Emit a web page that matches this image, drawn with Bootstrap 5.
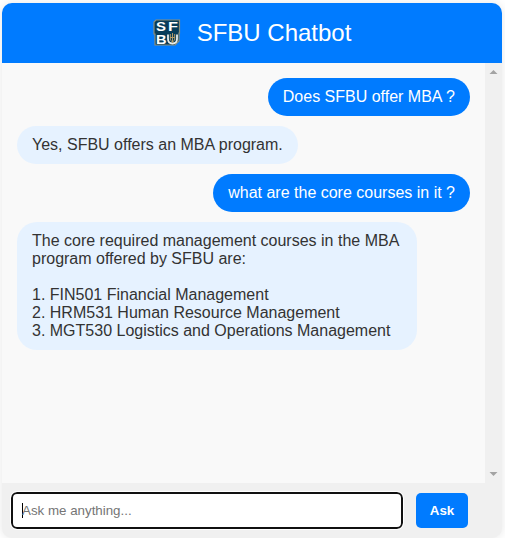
<!DOCTYPE html>
<html lang="en">
<head>
<meta charset="utf-8">
<meta name="viewport" content="width=device-width, initial-scale=1">
<title>SFBU Chatbot</title>
<link href="https://cdn.jsdelivr.net/npm/bootstrap@5.3.0/dist/css/bootstrap.min.css" rel="stylesheet">
<style>
body { font-family: "Liberation Sans", Arial, sans-serif; line-height: 18px; color: #333; padding: 3px 3px 0 2px; }
.chat { width: 500px; height: 535px; border-radius: 10px; background: #f0f0f0; box-shadow: 0 0 10px rgba(0,0,0,.1); }
.chat-head { height: 60px; background: #007bff; gap: 16px; }
.chat-title { font-size: 24px; line-height: 28px; font-weight: 400; }
.chat-body { height: 420px; }
.messages { background: #f9f9f9; padding: 15px; gap: 10px; }
.bubble { padding: 10px 15px; border-radius: 20px; max-width: 400px; }
.bubble-user { background: #007bff; color: #fff; }
.bubble-bot { background: #e6f2ff; }
.scroll-track { width: 17px; padding: 7px 0; }
.chat-foot { height: 55px; padding: 0 9px; gap: 13px; }
.ask-input { width: 392px; height: 37px; padding: 0 0 0 9px; border: 2px solid #101010; border-radius: 6px; outline: 1px solid #fff; outline-offset: 0; font-size: 13.33px; color: #757575; background: #fff; }
.caret { width: 1px; height: 15px; background: #000; margin-right: -1px; }
.ask-btn { width: 52px; height: 35px; background: #007bff; color: #fff; border-radius: 5px; font-size: 13.33px; font-weight: 700; line-height: 15px; }
.ask-btn:hover { background: #0069d9; color: #fff; }
</style>
<script src="https://cdn.jsdelivr.net/npm/bootstrap@5.3.0/dist/js/bootstrap.bundle.min.js"></script>
</head>
<body class="bg-white overflow-hidden">
<main class="chat d-flex flex-column overflow-hidden">
  <header class="chat-head d-flex align-items-center justify-content-center text-white">
    <svg width="28" height="28" viewBox="0 0 28 28" role="img" aria-label="SFBU">
      <path d="M3 1H26.5V14H26V22L22 26H2V15H1V3Z" fill="#073c59" stroke="#8c8e78" stroke-width="1.2"/>
      <g fill="#fff" font-family="Liberation Sans, Arial, sans-serif" font-weight="700" font-size="13.5">
        <text x="3" y="12.3" textLength="10" lengthAdjust="spacingAndGlyphs">S</text>
        <text x="15" y="12.3" textLength="10" lengthAdjust="spacingAndGlyphs">F</text>
        <text x="3" y="24.6" textLength="10.5" lengthAdjust="spacingAndGlyphs">B</text>
      </g>
      <path d="M15 15.5V20Q15 24.5 19.5 24.5T24 20V15.5" fill="none" stroke="#e9edea" stroke-width="1.8"/>
      <path d="M19.5 14V24M17.3 15V21M21.7 15V21M17 18.5H22M17.3 21L19.5 23L21.7 21" fill="none" stroke="#b39a67" stroke-width="1"/>
    </svg>
    <h1 class="chat-title m-0">SFBU Chatbot</h1>
  </header>
  <section class="chat-body d-flex">
    <div class="messages d-flex flex-column flex-grow-1">
      <div class="bubble bubble-user align-self-end">Does SFBU offer MBA ?</div>
      <div class="bubble bubble-bot align-self-start">Yes, SFBU offers an MBA program.</div>
      <div class="bubble bubble-user align-self-end">what are the core courses in it ?</div>
      <div class="bubble bubble-bot align-self-start">The core required management courses in the MBA program offered by SFBU are:<br><br>1. FIN501 Financial Management<br>2. HRM531 Human Resource Management<br>3. MGT530 Logistics and Operations Management</div>
    </div>
    <div class="scroll-track d-flex flex-column align-items-center justify-content-between flex-shrink-0">
      <svg width="9" height="4" viewBox="0 0 9 4"><path d="M.5 4L4.5 0L8.5 4Z" fill="#a3a3a3"/></svg>
      <svg width="9" height="4" viewBox="0 0 9 4"><path d="M.5 0L4.5 4L8.5 0Z" fill="#a3a3a3"/></svg>
    </div>
  </section>
  <footer class="chat-foot d-flex align-items-center">
    <div class="ask-input d-flex align-items-center" role="textbox"><span class="caret"></span><span>Ask me anything...</span></div>
    <button type="button" class="ask-btn btn border-0 p-0">Ask</button>
  </footer>
</main>
</body>
</html>
